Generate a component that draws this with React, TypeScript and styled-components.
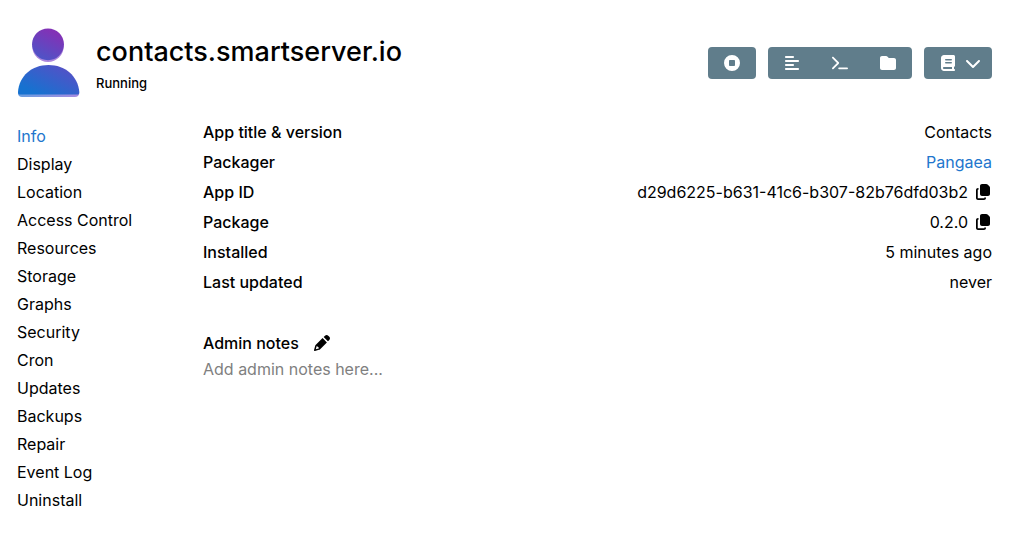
import React from "react";
import styled, { createGlobalStyle } from "styled-components";
import {
  FaAlignLeft,
  FaChevronDown,
  FaCircleStop,
  FaFolder,
  FaTerminal,
} from "react-icons/fa6";

const GlobalStyle = createGlobalStyle`
  *, *::before, *::after { box-sizing: border-box; }
  body {
    margin: 0;
    background: #fff;
    color: #000;
    font-family: Inter, "Liberation Sans", sans-serif;
    font-size: 16px;
    line-height: 20px;
  }
`;

const Page = styled.div`
  padding: 24px 32px 24px 17px;
`;

const Header = styled.header`
  display: flex;
  align-items: center;
  gap: 16px;
`;

const AppIcon = styled.svg`
  flex: none;
  width: 63px;
  height: 77px;
`;

const Heading = styled.div`
  flex: 1;
  min-width: 0;
`;

const Title = styled.h1`
  margin: 0 0 2px;
  font-size: 27px;
  line-height: 38px;
  font-weight: 500;
`;

const Status = styled.p`
  margin: 0;
  font-size: 13px;
  line-height: 20px;
  font-weight: 500;
`;

const Toolbar = styled.div`
  display: flex;
  gap: 12px;
`;

const ButtonGroup = styled.div`
  display: flex;
  border-radius: 4px;
  overflow: hidden;
  background: #607d8b;
`;

const ToolButton = styled.button<{ $menu?: boolean }>`
  display: flex;
  align-items: center;
  justify-content: center;
  gap: 9px;
  width: ${(p) => (p.$menu ? 68 : 48)}px;
  height: 32px;
  padding: ${(p) => (p.$menu ? "0 0 0 4px" : "0")};
  border: 0;
  background: transparent;
  color: #fff;
  font-size: 16px;
  cursor: pointer;
`;

const Icon = styled.svg`
  width: 16px;
  height: 16px;
  fill: currentColor;
`;

const Body = styled.div`
  display: flex;
  margin-top: 16px;
`;

const Nav = styled.nav`
  flex: none;
  width: 186px;
  padding-top: 9px;
`;

const NavList = styled.ul`
  display: flex;
  flex-direction: column;
  gap: 8px;
  margin: 0;
  padding: 0;
  list-style: none;
`;

const Link = styled.a<{ $accent?: boolean }>`
  color: ${(p) => (p.$accent ? "#2276cd" : "inherit")};
  text-decoration: none;
`;

const Content = styled.main`
  flex: 1;
  min-width: 0;
`;

const Details = styled.dl`
  margin: 0;
`;

const DetailRow = styled.div`
  display: flex;
  align-items: center;
  justify-content: space-between;
  height: 30px;
`;

const Label = styled.dt`
  font-weight: 500;
`;

const Value = styled.dd`
  display: flex;
  align-items: center;
  gap: 6px;
  margin: 0;
`;

const IconButton = styled.button`
  display: flex;
  padding: 0 1px;
  border: 0;
  background: transparent;
  color: inherit;
  cursor: pointer;
`;

const NotesHeader = styled.div`
  display: flex;
  align-items: center;
  gap: 14px;
  margin-top: 36px;
`;

const NotesTitle = styled.h2`
  margin: 0;
  font-size: 16px;
  line-height: 20px;
  font-weight: 500;
`;

const NotesText = styled.p`
  margin: 6px 0 0;
  color: #808080;
`;

const sections = [
  "Info",
  "Display",
  "Location",
  "Access Control",
  "Resources",
  "Storage",
  "Graphs",
  "Security",
  "Cron",
  "Updates",
  "Backups",
  "Repair",
  "Event Log",
  "Uninstall",
];

type Detail = { label: string; value: string; href?: string; copy?: boolean };

const details: Detail[] = [
  { label: "App title & version", value: "Contacts" },
  { label: "Packager", value: "Pangaea", href: "#packager" },
  { label: "App ID", value: "d29d6225-b631-41c6-b307-82b76dfd03b2", copy: true },
  { label: "Package", value: "0.2.0", copy: true },
  { label: "Installed", value: "5 minutes ago" },
  { label: "Last updated", value: "never" },
];

function ContactsIcon() {
  return (
    <AppIcon viewBox="0 0 63 77" aria-hidden="true">
      <defs>
        <linearGradient id="person" gradientUnits="userSpaceOnUse" x1="16" y1="68" x2="44" y2="12">
          <stop offset="0" stopColor="#1672d0" />
          <stop offset="0.5" stopColor="#4a56c8" />
          <stop offset="1" stopColor="#8232b6" />
        </linearGradient>
        <linearGradient id="edge" gradientUnits="userSpaceOnUse" x1="4" y1="70" x2="60" y2="70">
          <stop offset="0" stopColor="#6b9de0" />
          <stop offset="1" stopColor="#a58be0" />
        </linearGradient>
      </defs>
      <path d="M1 69C1 71.500 2.500 73 5 73H58C60.500 73 62 71.500 62.300 69L60 64H3Z" fill="url(#edge)" />
      <ellipse cx="31" cy="22" rx="15.800" ry="16" fill="#ac86dc" />
      <path d="M1 68C2 52 15 41 31.500 41S61 52 62.300 68C62.300 69.500 61.800 70.500 61 70.500H2.300C1.500 70.500 1 69.500 1 68Z" fill="url(#person)" />
      <ellipse cx="31" cy="20.300" rx="15.900" ry="15.900" fill="url(#person)" />
    </AppIcon>
  );
}

function BookIcon() {
  return (
    <Icon viewBox="-32 0 512 512" aria-hidden="true">
      <path
        fillRule="evenodd"
        d="M96 0C43 0 0 43 0 96V416c0 53 43 96 96 96H416c17.700 0 32-14.300 32-32s-14.300-32-32-32V378c18.600-6.600 32-24.400 32-45.300V48c0-26.500-21.500-48-48-48H96zM96 384H352v64H96c-17.700 0-32-14.300-32-32s14.300-32 32-32zM128 152c0-13.300 10.700-24 24-24H328c13.300 0 24 10.700 24 24s-10.700 24-24 24H152c-13.300 0-24-10.700-24-24zM152 224H328c13.300 0 24 10.700 24 24s-10.700 24-24 24H152c-13.300 0-24-10.700-24-24s10.700-24 24-24z"
      />
    </Icon>
  );
}

function CopyIcon() {
  return (
    <Icon viewBox="-32 0 512 512" aria-hidden="true">
      <path d="M192 0c-35.300 0-64 28.700-64 64v256c0 35.300 28.700 64 64 64h192c35.300 0 64-28.700 64-64v-200.600c0-17.400-7.100-34.100-19.700-46.200L370.600 17.800C358.700 6.400 342.800 0 326.300 0H192zM64 128c-35.300 0-64 28.700-64 64v256c0 35.300 28.700 64 64 64h192c35.300 0 64-28.700 64-64v-16h-56v24H56V184h24v-56z" />
    </Icon>
  );
}

function PencilIcon() {
  return (
    <Icon viewBox="0 0 512 512" aria-hidden="true">
      <path
        fillRule="evenodd"
        d="M36.400 353.200c4.100-14.600 11.800-27.900 22.600-38.700l215.100-215.100 137.900 137.900-215.100 215.100c-10.700 10.700-24.100 18.500-38.700 22.600L30.400 510.600c-8.300 2.300-17.300 0-23.400-6.200S-1.400 489.300.900 481L36.400 353.200zM92 349.500c-4.400 4.700-7.600 10.400-9.300 16.600l-24.100 86.900 86.900-24.100c6.400-1.800 12.200-5.100 17-9.700zM446 203.400L308 65.500 352.900 20.600C366.400 7 384.800 0 404 0s37.600 7 51.100 20.600l35.700 35.700C504.400 69.900 512 88.300 512 107.400s-7.600 37.600-21.200 51.100z"
      />
    </Icon>
  );
}

export default function App() {
  return (
    <>
      <GlobalStyle />
      <Page>
        <Header>
          <ContactsIcon />
          <Heading>
            <Title>contacts.smartserver.io</Title>
            <Status>Running</Status>
          </Heading>
          <Toolbar>
            <ButtonGroup>
              <ToolButton type="button" aria-label="Stop"><FaCircleStop /></ToolButton>
            </ButtonGroup>
            <ButtonGroup>
              <ToolButton type="button" aria-label="Logs"><FaAlignLeft /></ToolButton>
              <ToolButton type="button" aria-label="Terminal"><FaTerminal /></ToolButton>
              <ToolButton type="button" aria-label="File manager"><FaFolder /></ToolButton>
            </ButtonGroup>
            <ButtonGroup>
              <ToolButton type="button" aria-label="Documentation" $menu>
                <BookIcon />
                <FaChevronDown />
              </ToolButton>
            </ButtonGroup>
          </Toolbar>
        </Header>
        <Body>
          <Nav aria-label="App settings">
            <NavList>
              {sections.map((name, i) => (
                <li key={name}>
                  <Link
                    href={"#" + name.toLowerCase().replace(" ", "-")}
                    $accent={i === 0}
                    aria-current={i === 0 ? "page" : undefined}
                  >
                    {name}
                  </Link>
                </li>
              ))}
            </NavList>
          </Nav>
          <Content>
            <Details>
              {details.map((d) => (
                <DetailRow key={d.label}>
                  <Label>{d.label}</Label>
                  <Value>
                    {d.href ? <Link href={d.href} $accent>{d.value}</Link> : d.value}
                    {d.copy && (
                      <IconButton type="button" aria-label={"Copy " + d.label}><CopyIcon /></IconButton>
                    )}
                  </Value>
                </DetailRow>
              ))}
            </Details>
            <NotesHeader>
              <NotesTitle>Admin notes</NotesTitle>
              <IconButton type="button" aria-label="Edit admin notes"><PencilIcon /></IconButton>
            </NotesHeader>
            <NotesText>Add admin notes here...</NotesText>
          </Content>
        </Body>
      </Page>
    </>
  );
}
